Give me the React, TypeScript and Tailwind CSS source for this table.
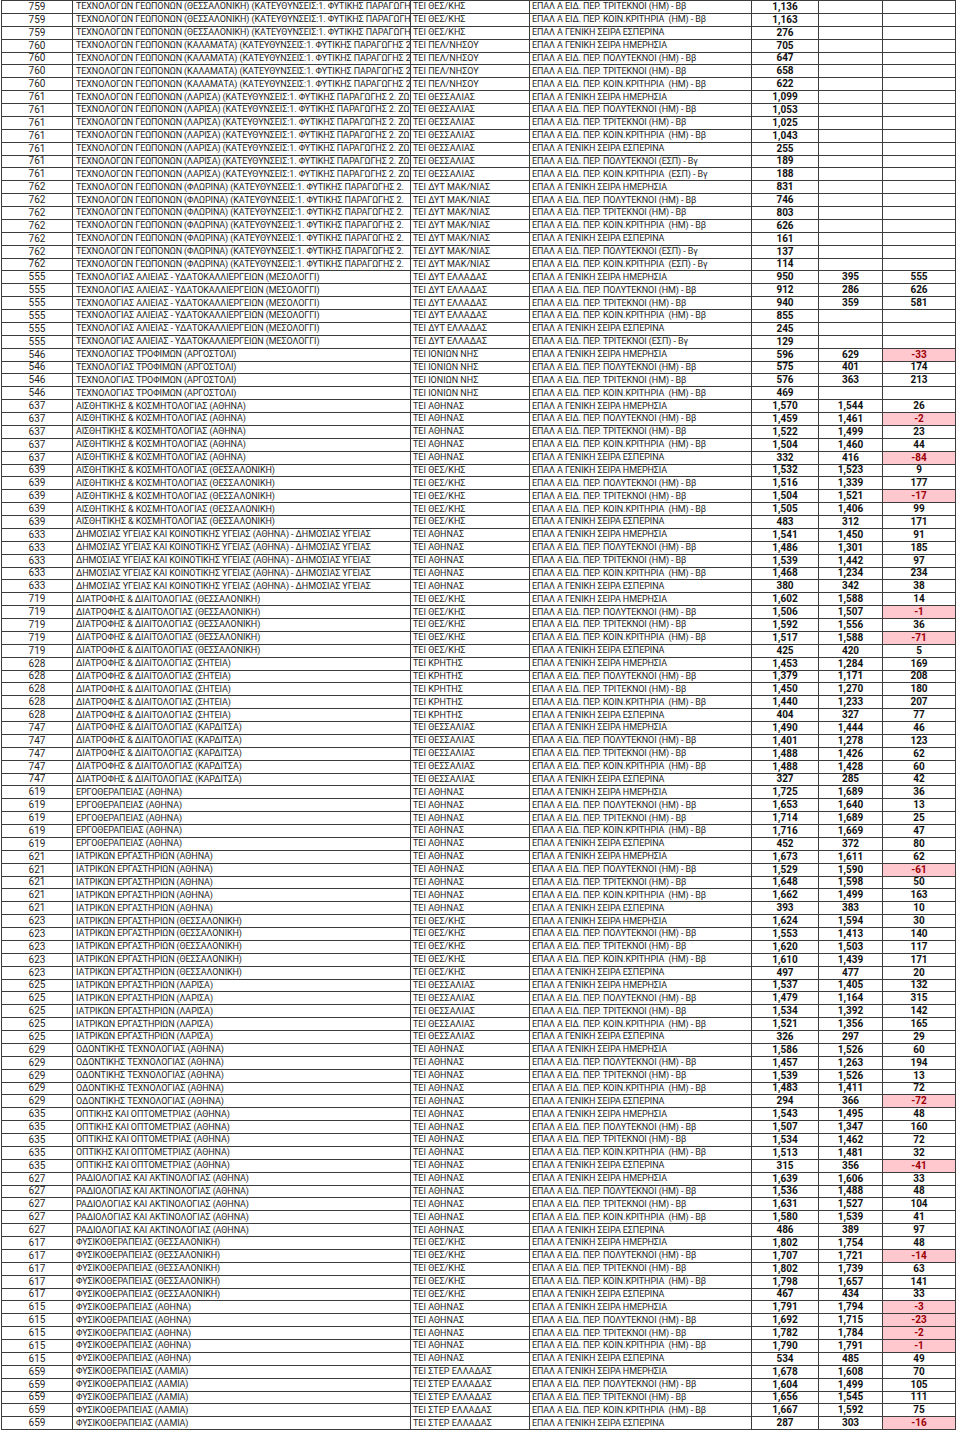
import React from 'react';

type Row = [string, string?, string?, string?];

type Group = {
  code: string;
  name: string;
  inst: string;
  rows: Row[];
};

// Exam categories, as written in the sheet
const H = 'ΕΠΑΛ Α ΓΕΝΙΚΗ ΣΕΙΡΑ ΗΜΕΡΗΣΙΑ';
const P = 'ΕΠΑΛ Α ΕΙΔ. ΠΕΡ. ΠΟΛΥΤΕΚΝΟΙ (ΗΜ) - Ββ';
const T = 'ΕΠΑΛ Α ΕΙΔ. ΠΕΡ. ΤΡΙΤΕΚΝΟΙ (ΗΜ) - Ββ';
const K = 'ΕΠΑΛ Α ΕΙΔ. ΠΕΡ. ΚΟΙΝ.ΚΡΙΤΗΡΙΑ  (ΗΜ) - Ββ';
const E = 'ΕΠΑΛ Α ΓΕΝΙΚΗ ΣΕΙΡΑ ΕΣΠΕΡΙΝΑ';
const PE = 'ΕΠΑΛ Α ΕΙΔ. ΠΕΡ. ΠΟΛΥΤΕΚΝΟΙ (ΕΣΠ) - Βγ';
const KE = 'ΕΠΑΛ Α ΕΙΔ. ΠΕΡ. ΚΟΙΝ.ΚΡΙΤΗΡΙΑ  (ΕΣΠ) - Βγ';
const TE = 'ΕΠΑΛ Α ΕΙΔ. ΠΕΡ. ΤΡΙΤΕΚΝΟΙ (ΕΣΠ) - Βγ';

const groups: Group[] = [
  {
    code: '759',
    name: 'ΤΕΧΝΟΛΟΓΩΝ ΓΕΩΠΟΝΩΝ (ΘΕΣΣΑΛΟΝΙΚΗ) (ΚΑΤΕΥΘΥΝΣΕΙΣ:1. ΦΥΤΙΚΗΣ ΠΑΡΑΓΩΓΗ',
    inst: 'ΤΕΙ ΘΕΣ/ΚΗΣ',
    rows: [[T, '1,136'], [K, '1,163'], [E, '276']],
  },
  {
    code: '760',
    name: 'ΤΕΧΝΟΛΟΓΩΝ ΓΕΩΠΟΝΩΝ (ΚΑΛΑΜΑΤΑ) (ΚΑΤΕΥΘΥΝΣΕΙΣ:1. ΦΥΤΙΚΗΣ ΠΑΡΑΓΩΓΗΣ 2',
    inst: 'ΤΕΙ ΠΕΛ/ΝΗΣΟΥ',
    rows: [[H, '705'], [P, '647'], [T, '658'], [K, '622']],
  },
  {
    code: '761',
    name: 'ΤΕΧΝΟΛΟΓΩΝ ΓΕΩΠΟΝΩΝ (ΛΑΡΙΣΑ) (ΚΑΤΕΥΘΥΝΣΕΙΣ:1. ΦΥΤΙΚΗΣ ΠΑΡΑΓΩΓΗΣ 2. ΖΩ',
    inst: 'ΤΕΙ ΘΕΣΣΑΛΙΑΣ',
    rows: [[H, '1,099'], [P, '1,053'], [T, '1,025'], [K, '1,043'], [E, '255'], [PE, '189'], [KE, '188']],
  },
  {
    code: '762',
    name: 'ΤΕΧΝΟΛΟΓΩΝ ΓΕΩΠΟΝΩΝ (ΦΛΩΡΙΝΑ) (ΚΑΤΕΥΘΥΝΣΕΙΣ:1. ΦΥΤΙΚΗΣ ΠΑΡΑΓΩΓΗΣ 2.',
    inst: 'ΤΕΙ ΔΥΤ ΜΑΚ/ΝΙΑΣ',
    rows: [[H, '831'], [P, '746'], [T, '803'], [K, '626'], [E, '161'], [PE, '137'], [KE, '114']],
  },
  {
    code: '555',
    name: 'ΤΕΧΝΟΛΟΓΙΑΣ ΑΛΙΕΙΑΣ - ΥΔΑΤΟΚΑΛΛΙΕΡΓΕΙΩΝ (ΜΕΣΟΛΟΓΓΙ)',
    inst: 'ΤΕΙ ΔΥΤ ΕΛΛΑΔΑΣ',
    rows: [[H, '950', '395', '555'], [P, '912', '286', '626'], [T, '940', '359', '581'], [K, '855'], [E, '245'], [TE, '129']],
  },
  {
    code: '546',
    name: 'ΤΕΧΝΟΛΟΓΙΑΣ ΤΡΟΦΙΜΩΝ (ΑΡΓΟΣΤΟΛΙ)',
    inst: 'ΤΕΙ ΙΟΝΙΩΝ ΝΗΣ',
    rows: [[H, '596', '629', '-33'], [P, '575', '401', '174'], [T, '576', '363', '213'], [K, '469']],
  },
  {
    code: '637',
    name: 'ΑΙΣΘΗΤΙΚΗΣ & ΚΟΣΜΗΤΟΛΟΓΙΑΣ (ΑΘΗΝΑ)',
    inst: 'ΤΕΙ ΑΘΗΝΑΣ',
    rows: [[H, '1,570', '1,544', '26'], [P, '1,459', '1,461', '-2'], [T, '1,522', '1,499', '23'], [K, '1,504', '1,460', '44'], [E, '332', '416', '-84']],
  },
  {
    code: '639',
    name: 'ΑΙΣΘΗΤΙΚΗΣ & ΚΟΣΜΗΤΟΛΟΓΙΑΣ (ΘΕΣΣΑΛΟΝΙΚΗ)',
    inst: 'ΤΕΙ ΘΕΣ/ΚΗΣ',
    rows: [[H, '1,532', '1,523', '9'], [P, '1,516', '1,339', '177'], [T, '1,504', '1,521', '-17'], [K, '1,505', '1,406', '99'], [E, '483', '312', '171']],
  },
  {
    code: '633',
    name: 'ΔΗΜΟΣΙΑΣ ΥΓΕΙΑΣ ΚΑΙ ΚΟΙΝΟΤΙΚΗΣ ΥΓΕΙΑΣ (ΑΘΗΝΑ) - ΔΗΜΟΣΙΑΣ ΥΓΕΙΑΣ',
    inst: 'ΤΕΙ ΑΘΗΝΑΣ',
    rows: [[H, '1,541', '1,450', '91'], [P, '1,486', '1,301', '185'], [T, '1,539', '1,442', '97'], [K, '1,468', '1,234', '234'], [E, '380', '342', '38']],
  },
  {
    code: '719',
    name: 'ΔΙΑΤΡΟΦΗΣ & ΔΙΑΙΤΟΛΟΓΙΑΣ (ΘΕΣΣΑΛΟΝΙΚΗ)',
    inst: 'ΤΕΙ ΘΕΣ/ΚΗΣ',
    rows: [[H, '1,602', '1,588', '14'], [P, '1,506', '1,507', '-1'], [T, '1,592', '1,556', '36'], [K, '1,517', '1,588', '-71'], [E, '425', '420', '5']],
  },
  {
    code: '628',
    name: 'ΔΙΑΤΡΟΦΗΣ & ΔΙΑΙΤΟΛΟΓΙΑΣ (ΣΗΤΕΙΑ)',
    inst: 'ΤΕΙ ΚΡΗΤΗΣ',
    rows: [[H, '1,453', '1,284', '169'], [P, '1,379', '1,171', '208'], [T, '1,450', '1,270', '180'], [K, '1,440', '1,233', '207'], [E, '404', '327', '77']],
  },
  {
    code: '747',
    name: 'ΔΙΑΤΡΟΦΗΣ & ΔΙΑΙΤΟΛΟΓΙΑΣ (ΚΑΡΔΙΤΣΑ)',
    inst: 'ΤΕΙ ΘΕΣΣΑΛΙΑΣ',
    rows: [[H, '1,490', '1,444', '46'], [P, '1,401', '1,278', '123'], [T, '1,488', '1,426', '62'], [K, '1,488', '1,428', '60'], [E, '327', '285', '42']],
  },
  {
    code: '619',
    name: 'ΕΡΓΟΘΕΡΑΠΕΙΑΣ (ΑΘΗΝΑ)',
    inst: 'ΤΕΙ ΑΘΗΝΑΣ',
    rows: [[H, '1,725', '1,689', '36'], [P, '1,653', '1,640', '13'], [T, '1,714', '1,689', '25'], [K, '1,716', '1,669', '47'], [E, '452', '372', '80']],
  },
  {
    code: '621',
    name: 'ΙΑΤΡΙΚΩΝ ΕΡΓΑΣΤΗΡΙΩΝ (ΑΘΗΝΑ)',
    inst: 'ΤΕΙ ΑΘΗΝΑΣ',
    rows: [[H, '1,673', '1,611', '62'], [P, '1,529', '1,590', '-61'], [T, '1,648', '1,598', '50'], [K, '1,662', '1,499', '163'], [E, '393', '383', '10']],
  },
  {
    code: '623',
    name: 'ΙΑΤΡΙΚΩΝ ΕΡΓΑΣΤΗΡΙΩΝ (ΘΕΣΣΑΛΟΝΙΚΗ)',
    inst: 'ΤΕΙ ΘΕΣ/ΚΗΣ',
    rows: [[H, '1,624', '1,594', '30'], [P, '1,553', '1,413', '140'], [T, '1,620', '1,503', '117'], [K, '1,610', '1,439', '171'], [E, '497', '477', '20']],
  },
  {
    code: '625',
    name: 'ΙΑΤΡΙΚΩΝ ΕΡΓΑΣΤΗΡΙΩΝ (ΛΑΡΙΣΑ)',
    inst: 'ΤΕΙ ΘΕΣΣΑΛΙΑΣ',
    rows: [[H, '1,537', '1,405', '132'], [P, '1,479', '1,164', '315'], [T, '1,534', '1,392', '142'], [K, '1,521', '1,356', '165'], [E, '326', '297', '29']],
  },
  {
    code: '629',
    name: 'ΟΔΟΝΤΙΚΗΣ ΤΕΧΝΟΛΟΓΙΑΣ (ΑΘΗΝΑ)',
    inst: 'ΤΕΙ ΑΘΗΝΑΣ',
    rows: [[H, '1,586', '1,526', '60'], [P, '1,457', '1,263', '194'], [T, '1,539', '1,526', '13'], [K, '1,483', '1,411', '72'], [E, '294', '366', '-72']],
  },
  {
    code: '635',
    name: 'ΟΠΤΙΚΗΣ ΚΑΙ ΟΠΤΟΜΕΤΡΙΑΣ (ΑΘΗΝΑ)',
    inst: 'ΤΕΙ ΑΘΗΝΑΣ',
    rows: [[H, '1,543', '1,495', '48'], [P, '1,507', '1,347', '160'], [T, '1,534', '1,462', '72'], [K, '1,513', '1,481', '32'], [E, '315', '356', '-41']],
  },
  {
    code: '627',
    name: 'ΡΑΔΙΟΛΟΓΙΑΣ ΚΑΙ ΑΚΤΙΝΟΛΟΓΙΑΣ (ΑΘΗΝΑ)',
    inst: 'ΤΕΙ ΑΘΗΝΑΣ',
    rows: [[H, '1,639', '1,606', '33'], [P, '1,536', '1,488', '48'], [T, '1,631', '1,527', '104'], [K, '1,580', '1,539', '41'], [E, '486', '389', '97']],
  },
  {
    code: '617',
    name: 'ΦΥΣΙΚΟΘΕΡΑΠΕΙΑΣ (ΘΕΣΣΑΛΟΝΙΚΗ)',
    inst: 'ΤΕΙ ΘΕΣ/ΚΗΣ',
    rows: [[H, '1,802', '1,754', '48'], [P, '1,707', '1,721', '-14'], [T, '1,802', '1,739', '63'], [K, '1,798', '1,657', '141'], [E, '467', '434', '33']],
  },
  {
    code: '615',
    name: 'ΦΥΣΙΚΟΘΕΡΑΠΕΙΑΣ (ΑΘΗΝΑ)',
    inst: 'ΤΕΙ ΑΘΗΝΑΣ',
    rows: [[H, '1,791', '1,794', '-3'], [P, '1,692', '1,715', '-23'], [T, '1,782', '1,784', '-2'], [K, '1,790', '1,791', '-1'], [E, '534', '485', '49']],
  },
  {
    code: '659',
    name: 'ΦΥΣΙΚΟΘΕΡΑΠΕΙΑΣ (ΛΑΜΙΑ)',
    inst: 'ΤΕΙ ΣΤΕΡ ΕΛΛΑΔΑΣ',
    rows: [[H, '1,678', '1,608', '70'], [P, '1,604', '1,499', '105'], [T, '1,656', '1,545', '111'], [K, '1,667', '1,592', '75'], [E, '287', '303', '-16']],
  },
];

const cell = 'h-full border-r border-[#3c3c3c] overflow-hidden whitespace-pre flex items-center leading-none';

const App: React.FC = () => {
  return (
    <div className="bg-white min-h-[1432px] font-['Roboto','Liberation_Sans',sans-serif] text-[#262626]">
      <div className="ml-px w-[955px] border-l border-t border-[#3c3c3c]">
        {groups.flatMap((g) =>
          g.rows.map(([kind, score, prev, diff], i) => {
            const negative = diff !== undefined && diff.startsWith('-');
            return (
              <div
                key={`${g.code}-${i}`}
                className="grid grid-cols-[71px_338px_119px_222px_67px_64px_73px] h-[12.88px] border-b border-[#3c3c3c]"
              >
                <div className={`${cell} justify-center text-[10px]`}>{g.code}</div>
                <div className={`${cell} pl-[3px] text-[9px] tracking-[-0.1px]`}>{g.name}</div>
                <div className={`${cell} pl-[2px] text-[9px]`}>{g.inst}</div>
                <div className={`${cell} pl-[2px] text-[9px] tracking-[-0.1px]`}>{kind}</div>
                <div className={`${cell} justify-center text-[10px] font-bold text-[#111]`}>{score}</div>
                <div className={`${cell} justify-center text-[10px] font-bold text-[#111]`}>{prev ?? ''}</div>
                <div
                  className={`${cell} justify-center text-[10px] font-bold ${
                    negative ? 'bg-[#ffc7ce] text-[#9c0006]' : 'text-[#111]'
                  }`}
                >
                  {diff ?? ''}
                </div>
              </div>
            );
          })
        )}
      </div>
    </div>
  );
};

export default App;
